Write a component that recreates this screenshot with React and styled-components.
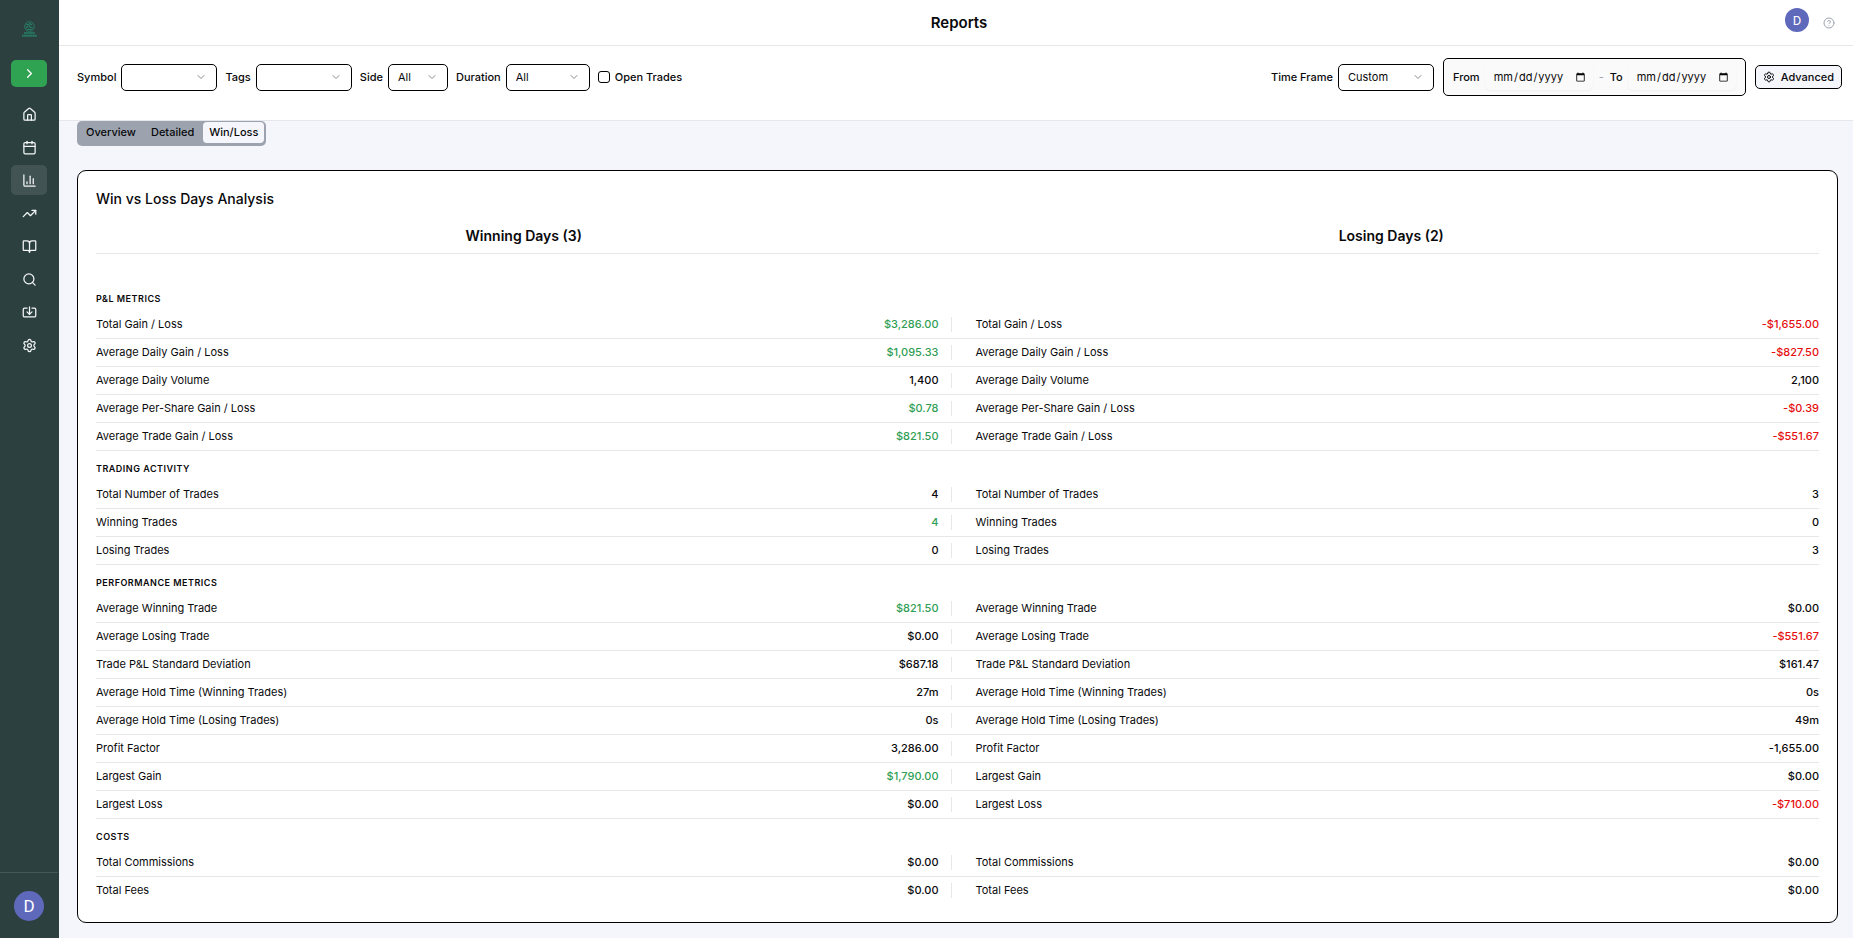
import React from "react";
import styled, { createGlobalStyle } from "styled-components";
import {
  BookOpen,
  Calendar,
  ChartColumn,
  ChevronDown,
  ChevronRight,
  CircleHelp,
  House,
  Import,
  Search,
  Settings,
  TrendingUp,
} from "lucide-react";

const GlobalStyle = createGlobalStyle`
  *, *::before, *::after { box-sizing: border-box; }
  body {
    margin: 0;
    background: #f5f6fb;
    color: #09090b;
    font-family: Inter, "Liberation Sans", sans-serif;
    font-size: 11px;
    line-height: 15px;
  }
  button, input, select { font: inherit; color: inherit; margin: 0; }
`;

const Page = styled.div`
  display: flex;
  min-height: 100vh;
`;

const Sidebar = styled.aside`
  display: flex;
  flex-direction: column;
  flex: none;
  width: 59px;
  border-right: 1px solid #2d4040;
  background: #2d4040;
`;

const LogoLink = styled.a`
  display: flex;
  justify-content: center;
  padding: 21px 0 22px;
`;

const ExpandButton = styled.button`
  display: grid;
  place-items: center;
  align-self: center;
  width: 36px;
  height: 27px;
  padding: 0;
  border: 0;
  border-radius: 5px;
  background: #2fa351;
  color: #fff;
`;

const Nav = styled.nav`
  display: flex;
  flex-direction: column;
  align-items: center;
  gap: 3px;
  padding-top: 12px;
`;

const NavLink = styled.a`
  display: grid;
  place-items: center;
  width: 36px;
  height: 30px;
  border-radius: 5px;
  background: ${(p) => (p.$active ? "#425353" : "transparent")};
  color: #f4f6f6;
`;

const SidebarFooter = styled.div`
  display: flex;
  justify-content: center;
  margin-top: auto;
  padding: 18px 0 17px;
  border-top: 1px solid #455656;
`;

const Avatar = styled.button`
  display: grid;
  place-items: center;
  width: ${(p) => p.$size}px;
  height: ${(p) => p.$size}px;
  padding: 0;
  border: 0;
  border-radius: 50%;
  background: #5f69bc;
  color: #fff;
  font-family: Roboto, sans-serif;
  font-size: ${(p) => (p.$size > 24 ? 17 : 13)}px;
`;

const Content = styled.div`
  flex: 1;
  min-width: 0;
`;

const Header = styled.header`
  display: grid;
  grid-template-columns: 1fr auto 1fr;
  align-items: center;
  height: 46px;
  padding: 0 18px 0 24px;
  border-bottom: 1px solid #e5e7eb;
  background: #fff;
`;

const Title = styled.h1`
  grid-column: 2;
  margin: 0;
  font-size: 15px;
  line-height: 20px;
  font-weight: 600;
`;

const HeaderActions = styled.div`
  display: flex;
  justify-content: flex-end;
  align-items: flex-end;
  gap: 14px;
  padding-bottom: 5px;
`;

const HelpButton = styled.button`
  display: flex;
  padding: 0;
  border: 0;
  background: none;
  color: #9ca3af;
  height: 15px;
`;

const Filters = styled.section`
  display: flex;
  justify-content: space-between;
  align-items: flex-start;
  height: 75px;
  padding: 12px 11px 0 18px;
  border-bottom: 1px solid #e5e7eb;
  background: #fff;
`;

const FilterGroup = styled.div`
  display: flex;
  align-items: center;
  gap: ${(p) => p.$gap}px;
  height: 38px;
`;

const Field = styled.label`
  display: flex;
  align-items: center;
  gap: 5px;
  font-weight: 500;
  white-space: nowrap;
`;

const SelectBox = styled.span`
  display: grid;
  align-items: center;
  width: ${(p) => p.$width}px;

  & > * { grid-area: 1 / 1; }
  & > svg {
    justify-self: end;
    margin-right: 10px;
    color: #8a8a8a;
    pointer-events: none;
  }
`;

const Select = styled.select`
  appearance: none;
  width: 100%;
  height: 27px;
  padding: 0 24px 0 9px;
  border: 1px solid #000;
  border-radius: 5px;
  background: #fff;
  font-weight: 400;
`;

const Checkbox = styled.input`
  appearance: none;
  width: 12px;
  height: 12px;
  border: 1px solid #000;
  border-radius: 3px;
  background: #fff;
  &:checked { background: #2fa351; }
`;

const DateRange = styled.div`
  display: flex;
  align-items: center;
  gap: 6px;
  height: 38px;
  padding: 0 9px;
  border: 1px solid #000;
  border-radius: 5px;
  background: #fafafa;
`;

const DateInput = styled.input`
  width: 108px;
  height: 25px;
  padding: 0 5px 0 8px;
  border: 0;
  border-radius: 5px;
  background: #fafafa;
  box-shadow: 0 1px 2px rgba(0, 0, 0, 0.05);
  font-weight: 400;
`;

const Dash = styled.span`
  color: #9ca3af;
`;

const AdvancedButton = styled.button`
  display: flex;
  align-items: center;
  gap: 6px;
  height: 24px;
  padding: 0 7px;
  border: 1px solid #000;
  border-radius: 5px;
  background: #f5f6fb;
  font-weight: 500;
`;

const Main = styled.main`
  padding: 0 15px 15px 18px;
`;

const Tabs = styled.div`
  display: flex;
  width: max-content;
  gap: 3px;
  height: 25px;
  padding: 1px 2px 3px 3px;
  border-radius: 5px;
  background: #9ca3af;
`;

const Tab = styled.button`
  height: 21px;
  padding: 0 6px;
  border: 0;
  border-radius: 4px;
  background: ${(p) => (p.$active ? "#f5f6fb" : "transparent")};
  font-weight: 500;
`;

const Card = styled.section`
  margin-top: 24px;
  padding: 18px;
  border: 1px solid #000;
  border-radius: 9px;
  background: #fff;
`;

const CardTitle = styled.h2`
  margin: 0;
  font-size: 14px;
  line-height: 20px;
  font-weight: 500;
`;

const Table = styled.table`
  width: 100%;
  margin-top: 15px;
  border-collapse: separate;
  border-spacing: 0;
  table-layout: fixed;
`;

const GroupHeading = styled.th`
  height: 30px;
  padding: ${(p) => (p.$side === "left" ? "0 6px 6px 0" : "0 0 6px 6px")};
  border-bottom: 1px solid #e5e7eb;
  font-size: 14px;
  line-height: 20px;
  font-weight: 600;
`;

const SectionHeading = styled.th`
  height: ${(p) => (p.$first ? 57 : 30)}px;
  padding: 0 0 5px;
  vertical-align: bottom;
  text-align: left;
  font-size: 9px;
  line-height: 14px;
  font-weight: 600;
  letter-spacing: 0.5px;
  text-transform: uppercase;
`;

const cellLine = (p) => (p.$last ? "0" : "1px solid #e5e7eb");

const Metric = styled.th`
  height: ${(p) => (p.$last ? 27 : 28)}px;
  padding: 6px 0 6px ${(p) => (p.$side === "right" ? 18 : 0)}px;
  border-bottom: ${cellLine};
  text-align: left;
  font-weight: 400;
`;

const tones = { gain: "#2f9e55", loss: "#e60d0d", plain: "#09090b" };

const Value = styled.td`
  padding: 6px ${(p) => (p.$side === "left" ? 6 : 0)}px 6px 0;
  border-bottom: ${cellLine};
  text-align: right;
  font-weight: 500;
  color: ${(p) => tones[p.$tone]};
`;

const Divided = styled.div`
  padding-right: 12px;
  border-right: 1px solid #e5e7eb;
`;

const navItems = [
  ["Home", House],
  ["Calendar", Calendar],
  ["Reports", ChartColumn],
  ["Trades", TrendingUp],
  ["Journal", BookOpen],
  ["Search", Search],
  ["Import", Import],
  ["Settings", Settings],
];

const sections = [
  ["P&L Metrics", [
    ["Total Gain / Loss", "$3,286.00", "gain", "-$1,655.00", "loss"],
    ["Average Daily Gain / Loss", "$1,095.33", "gain", "-$827.50", "loss"],
    ["Average Daily Volume", "1,400", "plain", "2,100", "plain"],
    ["Average Per-Share Gain / Loss", "$0.78", "gain", "-$0.39", "loss"],
    ["Average Trade Gain / Loss", "$821.50", "gain", "-$551.67", "loss"],
  ]],
  ["Trading Activity", [
    ["Total Number of Trades", "4", "plain", "3", "plain"],
    ["Winning Trades", "4", "gain", "0", "plain"],
    ["Losing Trades", "0", "plain", "3", "plain"],
  ]],
  ["Performance Metrics", [
    ["Average Winning Trade", "$821.50", "gain", "$0.00", "plain"],
    ["Average Losing Trade", "$0.00", "plain", "-$551.67", "loss"],
    ["Trade P&L Standard Deviation", "$687.18", "plain", "$161.47", "plain"],
    ["Average Hold Time (Winning Trades)", "27m", "plain", "0s", "plain"],
    ["Average Hold Time (Losing Trades)", "0s", "plain", "49m", "plain"],
    ["Profit Factor", "3,286.00", "plain", "-1,655.00", "plain"],
    ["Largest Gain", "$1,790.00", "gain", "$0.00", "plain"],
    ["Largest Loss", "$0.00", "plain", "-$710.00", "loss"],
  ]],
  ["Costs", [
    ["Total Commissions", "$0.00", "plain", "$0.00", "plain"],
    ["Total Fees", "$0.00", "plain", "$0.00", "plain"],
  ]],
];

function Logo() {
  return (
    <svg width="17" height="17" viewBox="0 0 17 17" fill="none" stroke="#258067" aria-hidden="true">
      <circle cx="8.5" cy="5.5" r="4.8" strokeWidth="0.9" />
      <path d="M5 3l3 1 1 2 3 1M8 2l3 2M5 7l2-2M8 8l3 1M6 9l2-1" strokeWidth="1.2" />
      <path d="M3 12h11M1 14.7h15" strokeWidth="1.6" strokeDasharray="1.5 0.6" />
      <path d="M3 12h11M1 14.7h15" strokeWidth="2.4" opacity="0.35" />
    </svg>
  );
}

function SelectField({ label, width, value }) {
  return (
    <Field>
      {label}
      <SelectBox $width={width}>
        <Select defaultValue={value}>
          <option value={value}>{value}</option>
        </Select>
        <ChevronDown size={12} />
      </SelectBox>
    </Field>
  );
}

export default function App() {
  return (
    <Page>
      <GlobalStyle />
      <Sidebar>
        <LogoLink href="#home" aria-label="Trade Voyager"><Logo /></LogoLink>
        <ExpandButton aria-label="Expand sidebar"><ChevronRight size={15} /></ExpandButton>
        <Nav>
          {navItems.map(([name, Icon]) => (
            <NavLink key={name} href={`#${name.toLowerCase()}`} aria-label={name} $active={name === "Reports"}>
              <Icon size={15} strokeWidth={2} />
            </NavLink>
          ))}
        </Nav>
        <SidebarFooter><Avatar $size={30}>D</Avatar></SidebarFooter>
      </Sidebar>
      <Content>
        <Header>
          <Title>Reports</Title>
          <HeaderActions>
            <Avatar $size={24}>D</Avatar>
            <HelpButton aria-label="Help"><CircleHelp size={12} /></HelpButton>
          </HeaderActions>
        </Header>
        <Filters>
          <FilterGroup $gap={8}>
            <SelectField label="Symbol" width={96} value="" />
            <SelectField label="Tags" width={96} value="" />
            <SelectField label="Side" width={60} value="All" />
            <SelectField label="Duration" width={84} value="All" />
            <Field><Checkbox type="checkbox" />Open Trades</Field>
          </FilterGroup>
          <FilterGroup $gap={9}>
            <SelectField label="Time Frame" width={96} value="Custom" />
            <DateRange>
              <Field>From<DateInput type="date" /></Field>
              <Dash>-</Dash>
              <Field>To<DateInput type="date" /></Field>
            </DateRange>
            <AdvancedButton><Settings size={12} />Advanced</AdvancedButton>
          </FilterGroup>
        </Filters>
        <Main>
          <Tabs role="tablist">
            <Tab role="tab">Overview</Tab>
            <Tab role="tab">Detailed</Tab>
            <Tab role="tab" aria-selected="true" $active>Win/Loss</Tab>
          </Tabs>
          <Card>
            <CardTitle>Win vs Loss Days Analysis</CardTitle>
            <Table>
              <thead>
                <tr>
                  <GroupHeading colSpan={2} $side="left">Winning Days (3)</GroupHeading>
                  <GroupHeading colSpan={2} $side="right">Losing Days (2)</GroupHeading>
                </tr>
              </thead>
              {sections.map(([name, rows], s) => (
                <tbody key={name}>
                  <tr><SectionHeading colSpan={4} $first={s === 0}>{name}</SectionHeading></tr>
                  {rows.map(([label, win, winTone, loss, lossTone], r) => {
                    const last = s === sections.length - 1 && r === rows.length - 1;
                    return (
                      <tr key={label}>
                        <Metric $side="left" $last={last}>{label}</Metric>
                        <Value $side="left" $tone={winTone} $last={last}><Divided>{win}</Divided></Value>
                        <Metric $side="right" $last={last}>{label}</Metric>
                        <Value $side="right" $tone={lossTone} $last={last}>{loss}</Value>
                      </tr>
                    );
                  })}
                </tbody>
              ))}
            </Table>
          </Card>
        </Main>
      </Content>
    </Page>
  );
}
